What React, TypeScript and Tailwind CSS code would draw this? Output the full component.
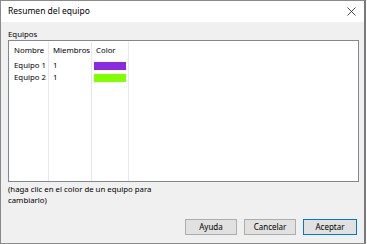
import React from "react";

export default function App() {
  const font = { fontFamily: '"Segoe UI", "Noto Sans", "Liberation Sans", sans-serif' };
  return (
    <div className="w-[367px] h-[244px] bg-white" style={font}>
      <div className="w-[366px] h-[244px] border border-[#8a8a8a] border-r-2 border-r-[#7a7a7a] flex flex-col bg-[#f0f0f0] text-[7.8px] text-black leading-none">
        <div className="h-[21px] bg-white flex items-center justify-between pl-[7px] pr-[6px] shrink-0">
          <span className="text-[8.5px]">Resumen del equipo</span>
          <svg width="9" height="9" viewBox="0 0 9 9" className="mr-[2px]">
            <path d="M0.5 0.5 L8.5 8.5 M8.5 0.5 L0.5 8.5" stroke="#333" strokeWidth="0.9" />
          </svg>
        </div>
        <div className="flex flex-col px-[7px] pt-[7px] flex-1">
          <div className="h-[11px] flex items-center">Equipos</div>
          <div className="h-[142px] w-[351px] bg-white border border-[#828790] flex pt-[1px] pl-[1px]">
            <div className="w-[39px] border-r border-[#e8e8e8] flex flex-col">
              <div className="h-[18px] flex items-center pl-[4px]">Nombre</div>
              <div className="h-[12px] flex items-center pl-[4px]">Equipo 1</div>
              <div className="h-[12px] flex items-center pl-[4px]">Equipo 2</div>
            </div>
            <div className="w-[43px] border-r border-[#e8e8e8] flex flex-col">
              <div className="h-[18px] flex items-center pl-[4px]">Miembros</div>
              <div className="h-[12px] flex items-center pl-[4px]">1</div>
              <div className="h-[12px] flex items-center pl-[4px]">1</div>
            </div>
            <div className="w-[37px] border-r border-[#e8e8e8] flex flex-col">
              <div className="h-[18px] flex items-center pl-[4px]">Color</div>
              <div className="h-[12px] flex items-center pl-[2px]">
                <div className="w-[32px] h-[8px] bg-[#8a2be2]" />
              </div>
              <div className="h-[12px] flex items-center pl-[2px]">
                <div className="w-[32px] h-[8px] bg-[#7fff00]" />
              </div>
            </div>
          </div>
          <div className="mt-[2px] leading-[11px] w-[150px]">
            (haga clic en el color de un equipo para cambiarlo)
          </div>
          <div className="flex justify-end gap-[7px] mt-[13px] pr-0">
            <button className="w-[52px] h-[16px] bg-[#e1e1e1] border border-[#adadad] text-[8px] leading-none">Ayuda</button>
            <button className="w-[52px] h-[16px] bg-[#e1e1e1] border border-[#adadad] text-[8px] leading-none">Cancelar</button>
            <button className="w-[54px] h-[16px] bg-[#e1e1e1] border border-[#0078d7] text-[8px] leading-none">Aceptar</button>
          </div>
        </div>
      </div>
    </div>
  );
}
